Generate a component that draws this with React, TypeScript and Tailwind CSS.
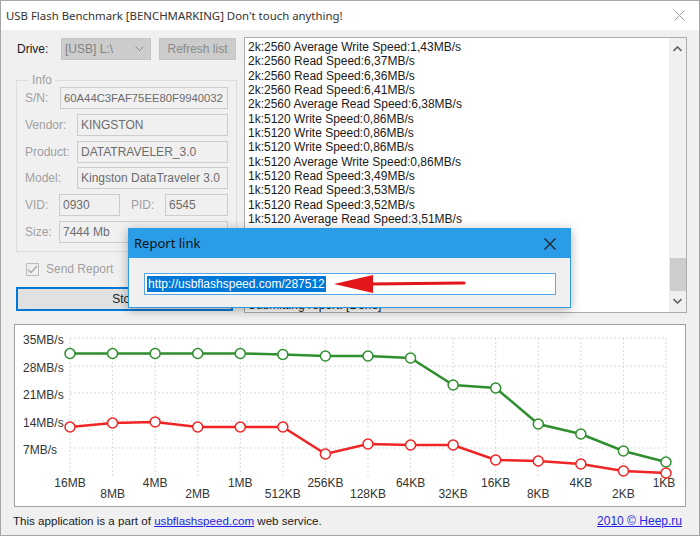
import React from "react"

const logLines = [
  "2k:2560 Average Write Speed:1,43MB/s",
  "2k:2560 Read Speed:6,37MB/s",
  "2k:2560 Read Speed:6,36MB/s",
  "2k:2560 Read Speed:6,41MB/s",
  "2k:2560 Average Read Speed:6,38MB/s",
  "1k:5120 Write Speed:0,86MB/s",
  "1k:5120 Write Speed:0,86MB/s",
  "1k:5120 Write Speed:0,86MB/s",
  "1k:5120 Average Write Speed:0,86MB/s",
  "1k:5120 Read Speed:3,49MB/s",
  "1k:5120 Read Speed:3,53MB/s",
  "1k:5120 Read Speed:3,52MB/s",
  "1k:5120 Average Read Speed:3,51MB/s",
  "Deleting files: [Done]",
  "Benchmark finished",
  "",
  "",
  "",
  "Submitting report: [Done]",
]

const sizes = ["16MB", "8MB", "4MB", "2MB", "1MB", "512KB", "256KB", "128KB", "64KB", "32KB", "16KB", "8KB", "4KB", "2KB", "1KB"]
const green = [354.5, 354.5, 354.5, 354.5, 354.5, 355.5, 357, 357, 359, 386, 389, 425, 435, 452, 463]
const red = [428, 424, 423, 428, 428, 428, 455, 445, 446, 446, 461, 462, 465, 472, 474]
const xs = sizes.map((_, i) => 70 + i * 42.57)
const gridY = [339, 367, 394, 422, 449]
const yLabels = ["35MB/s", "28MB/s", "21MB/s", "14MB/s", "7MB/s"]

const sans = "font-['Liberation_Sans',Arial,sans-serif]"

function Field({ w, value, small }: { w: string; value: string; small?: boolean }) {
  return (
    <div
      className={`${w} h-[22px] border border-[#cccccc] bg-[#f0f0f0] flex items-center pl-[3px] overflow-hidden whitespace-nowrap text-[#6d6d6d] ${
        small ? "text-[11.3px]" : ""
      }`}
    >
      {value}
    </div>
  )
}

function Chart() {
  const line = (ys: number[]) => ys.map((y, i) => `${xs[i]},${y}`).join(" ")
  return (
    <svg width="670" height="181" viewBox="15 326 670 181" className="block">
      {/* сетка */}
      {gridY.map((y) => (
        <line key={y} x1={70} x2={666} y1={y} y2={y} stroke="#d9d9d9" strokeDasharray="2 2" />
      ))}
      {xs.map((x) => (
        <line key={x} x1={x} x2={x} y1={339} y2={477} stroke="#d9d9d9" strokeDasharray="2 2" />
      ))}
      {yLabels.map((t, i) => (
        <text key={t} x={23} y={gridY[i] + 6} fontSize="12" fill="#333" fontFamily="Liberation Sans, Arial, sans-serif">
          {t}
        </text>
      ))}
      {sizes.map((t, i) => (
        <text
          key={t}
          x={i === sizes.length - 1 ? xs[i] - 2 : xs[i]}
          y={i % 2 === 0 ? 488 : 499}
          fontSize="12"
          fill="#333"
          textAnchor="middle"
          fontFamily="Liberation Sans, Arial, sans-serif"
        >
          {t}
        </text>
      ))}
      <polyline points={line(green)} fill="none" stroke="#2f8f2f" strokeWidth="2.5" />
      <polyline points={line(red)} fill="none" stroke="#f02424" strokeWidth="2.5" />
      {green.map((y, i) => (
        <circle key={"g" + i} cx={xs[i]} cy={y} r="5" fill="#fff" stroke="#2f8f2f" strokeWidth="1.5" />
      ))}
      {red.map((y, i) => (
        <circle key={"r" + i} cx={xs[i]} cy={y} r="5" fill="#fff" stroke="#f02424" strokeWidth="1.5" />
      ))}
    </svg>
  )
}

export default function App() {
  return (
    <div className={`relative w-[700px] h-[536px] border border-[#a6a6a6] bg-[#f0f0f0] overflow-hidden text-[12px] ${sans}`}>
      {/* заголовок окна */}
      <div className="h-[29px] bg-white flex items-center justify-between pl-[5px] pr-[14px]">
        <span className="font-['Noto_Sans',sans-serif] text-[11.4px] text-[#333]">
          USB Flash Benchmark [BENCHMARKING] Don't touch anything!
        </span>
        <svg width="11" height="11" viewBox="0 0 11 11">
          <path d="M0.5 0.5L10.5 10.5M10.5 0.5L0.5 10.5" stroke="#9a9a9a" strokeWidth="1" />
        </svg>
      </div>

      <div className="flex pt-[7px] pl-[14px]">
        {/* левая колонка */}
        <div className="w-[222px] flex flex-col">
          <div className="flex items-center h-[22px] mt-[1px]">
            <span className="ml-[2px] w-[44px] text-[#1a1a1a]">Drive:</span>
            <div className="w-[90px] h-[22px] bg-[#cccccc] border border-[#c4c4c4] flex items-center justify-between pl-[3px] pr-[6px] text-[#838383]">
              <span>[USB] L:\</span>
              <svg width="9" height="6" viewBox="0 0 9 6">
                <path d="M0.5 0.5L4.5 4.5L8.5 0.5" fill="none" stroke="#8a8a8a" strokeWidth="1" />
              </svg>
            </div>
            <div className="ml-[8px] w-[77px] h-[22px] bg-[#cccccc] border border-[#c4c4c4] flex items-center justify-center text-[#8a8a8a]">
              Refresh list
            </div>
          </div>

          <fieldset className="mt-[13px] ml-[1px] w-[221px] border border-[#dcdcdc] px-[8px] pb-[8px]">
            <legend className="ml-[4px] px-[3px] text-[#a0a0a0] leading-[14px]">Info</legend>
            <div className="flex flex-col gap-[4.8px] text-[#a0a0a0]">
              <div className="flex items-center">
                <span className="w-[35px]">S/N:</span>
                <Field w="w-[168px]" value="60A44C3FAF75EE80F9940032" small />
              </div>
              <div className="flex items-center">
                <span className="w-[52px]">Vendor:</span>
                <Field w="w-[151px]" value="KINGSTON" />
              </div>
              <div className="flex items-center">
                <span className="w-[52px]">Product:</span>
                <Field w="w-[151px]" value="DATATRAVELER_3.0" />
              </div>
              <div className="flex items-center">
                <span className="w-[52px]">Model:</span>
                <Field w="w-[151px]" value="Kingston DataTraveler 3.0" />
              </div>
              <div className="flex items-center">
                <span className="w-[34px]">VID:</span>
                <Field w="w-[61px]" value="0930" />
                <span className="ml-[11px] w-[34px]">PID:</span>
                <Field w="w-[63px]" value="6545" />
              </div>
              <div className="flex items-center">
                <span className="w-[34px]">Size:</span>
                <Field w="w-[169px]" value="7444 Mb" />
              </div>
            </div>
          </fieldset>

          <div className="flex items-center mt-[11px] ml-[11px] h-[13px]">
            <div className="w-[13px] h-[13px] border border-[#bcbcbc] bg-[#f0f0f0] flex items-center justify-center">
              <svg width="11" height="9" viewBox="0 0 11 9">
                <path d="M1 4.5L4 7.5L10 1" fill="none" stroke="#a8a8a8" strokeWidth="1.3" />
              </svg>
            </div>
            <span className="ml-[7px] text-[#a0a0a0]">Send Report</span>
          </div>

          <div className="mt-[11px] ml-[1px] w-[217px] h-[24px] bg-[#e1e1e1] border-2 border-[#0078d7] flex items-center justify-center text-[#1a1a1a]">
            Stop
          </div>
        </div>

        {/* лог */}
        <div className="ml-[7px] w-[443px] h-[276px] border border-[#adadad] bg-white flex">
          <div className="flex-1 pl-[3px] pt-[2px] overflow-hidden text-[#1a1a1a] leading-[14.33px] whitespace-nowrap">
            {logLines.map((l, i) => (
              <div key={i} className="h-[14.33px]">
                {l}
              </div>
            ))}
          </div>
          <div className="w-[17px] bg-[#f0f0f0] flex flex-col items-center justify-between py-[8px]">
            <svg width="9" height="6" viewBox="0 0 9 6">
              <path d="M0.5 5L4.5 1L8.5 5" fill="none" stroke="#606060" strokeWidth="1.6" />
            </svg>
            <div className="flex flex-col items-center gap-[7px]">
              <div className="w-[16px] h-[33px] bg-[#cdcdcd]" />
              <svg width="9" height="6" viewBox="0 0 9 6">
                <path d="M0.5 1L4.5 5L8.5 1" fill="none" stroke="#606060" strokeWidth="1.6" />
              </svg>
            </div>
          </div>
        </div>
      </div>

      {/* график */}
      <div className="mt-[11px] ml-[13px] w-[672px] h-[183px] border border-[#a0a0a0] bg-white">
        <Chart />
      </div>

      {/* подвал */}
      <div className="flex justify-between items-center mt-[5px] pl-[12px] pr-[17px] text-[#1a1a1a]">
        <span className="text-[11.6px]">
          This application is a part of <span className="text-[#1f1fe8] underline">usbflashspeed.com</span> web service.
        </span>
        <span className="text-[12px] text-[#1f1fe8] underline">2010 © Heep.ru</span>
      </div>

      {/* диалог */}
      <div className="absolute left-[127px] top-[227px] w-[443px] h-[80px] border border-[#2f9be3] bg-[#f0f0f0] shadow-[0_2px_10px_rgba(0,0,0,0.3)]">
        <div className="h-[29px] bg-[#2b9de8] flex items-center justify-between pl-[5px] pr-[14px]">
          <span className="font-['Noto_Sans',sans-serif] text-[13px] text-[#111]">Report link</span>
          <svg width="12" height="12" viewBox="0 0 12 12">
            <path d="M0.5 0.5L11.5 11.5M11.5 0.5L0.5 11.5" stroke="#1a1a1a" strokeWidth="1.1" />
          </svg>
        </div>
        <div className="relative mt-[15px] ml-[15px] w-[412px] h-[22px] border border-[#5aa6e8] bg-white flex items-center pl-[2px]">
          <span className="bg-[#0078d7] text-white leading-[16px] px-[1px]">http://usbflashspeed.com/287512</span>
          <svg className="absolute left-[189px] top-[1px]" width="132" height="20" viewBox="0 0 132 20">
            <polygon points="0,9 39,0 39,18" fill="#e3161c" />
            <path d="M36 9L130 8" stroke="#e3161c" strokeWidth="3.2" strokeLinecap="round" />
          </svg>
        </div>
      </div>
    </div>
  )
}
